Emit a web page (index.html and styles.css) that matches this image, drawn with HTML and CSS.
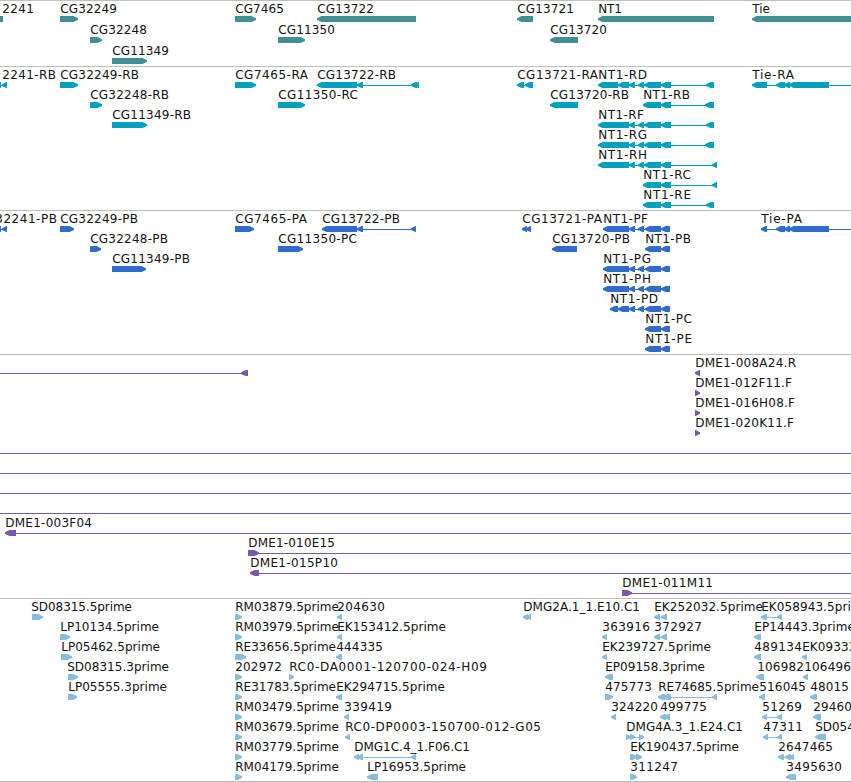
FILE: index.html
```
<!DOCTYPE html>
<html lang="en">
<head>
    <meta charset="UTF-8">
    <meta name="viewport" content="width=device-width, initial-scale=1.0">
    <title>Genome Browser</title>
    <link rel="stylesheet" href="styles.css">
</head>
<body>
    <main class="browser" id="browser"></main>
    <script src="tracks.js"></script>
</body>
</html>
```
FILE: styles.css
```
body {
    margin: 0;
    background: #fff;
    font-family: "DejaVu Sans", sans-serif;
    font-size: 12px;
    color: #000;
}
.browser {
    display: flex;
    flex-direction: column;
    overflow: hidden;
    border-bottom: 1px solid #bebebe;
}
.track {
    box-sizing: border-box;
    border-top: 1px solid #bebebe;
    overflow: hidden;
}
.track svg {
    display: block;
    width: 100%;
    height: 100%;
}
.track text {
    fill: #111;
}
.genes {
    height: 66px;
    color: #408f94;
}
.transcripts {
    height: 144px;
    color: #00a0c0;
}
.proteins {
    height: 144px;
    color: #306ccc;
}
.clones {
    height: 244px;
    color: #7858a8;
}
.ests {
    height: 183px;
    color: #88bcdc;
}
.glyph {
    fill: currentColor;
}
.intron {
    fill: currentColor;
    shape-rendering: crispEdges;
}
```
FILE: tracks.js
```
// feature: [row, strand, label, label start, label end, blocks, line end]
const ntExons = [[629, 635], [638, 644], [644, 661], [661, 671]];
const ntCds = [[603, 629], [629, 635], [638, 644], [645, 661], [661, 670]];
const tieExons = [[776, 785], [784, 790], [789, 829]];

const tracks = [
    { name: 'genes', pitch: 21, features: [
        [0, '-', '2241', 3, 34, [[-8, 3]]],
        [0, '+', 'CG32249', 61, 117, [[60, 78]]],
        [0, '+', 'CG7465', 236, 284, [[235, 256]]],
        [0, '-', 'CG13722', 318, 374, [[317, 416]]],
        [0, '-', 'CG13721', 518, 574, [[517, 533]]],
        [0, '-', 'NT1', 599, 622, [[598, 714]]],
        [0, '-', 'Tie', 753, 770, [[752, 860]]],
        [1, '+', 'CG32248', 91, 147, [[90, 102]]],
        [1, '+', 'CG11350', 279, 335, [[278, 305]]],
        [1, '-', 'CG13720', 551, 607, [[550, 578]]],
        [2, '+', 'CG11349', 113, 169, [[112, 147]]]
    ] },
    { name: 'transcripts', pitch: 20, features: [
        [0, '-', '2241-RB', 3, 56, [[-4, 1], [2, 7]]],
        [0, '+', 'CG32249-RB', 61, 139, [[60, 78]]],
        [0, '+', 'CG7465-RA', 236, 308, [[235, 256]]],
        [0, '-', 'CG13722-RB', 318, 396, [[317, 357], [357, 363], [411, 417], [414, 419]]],
        [0, '-', 'CG13721-RA', 518, 598, [[517, 524], [525, 533]]],
        [0, '-', 'NT1-RD', 599, 647, [[598, 618], [618, 629], ...ntExons, [706, 714]]],
        [0, '-', 'Tie-RA', 753, 794, [[752, 767], ...tieExons], 860],
        [1, '+', 'CG32248-RB', 91, 169, [[90, 102]]],
        [1, '+', 'CG11350-RC', 279, 358, [[278, 305]]],
        [1, '-', 'CG13720-RB', 551, 629, [[550, 578]]],
        [1, '-', 'NT1-RB', 644, 690, [[643, 661], [661, 671], [705, 714]]],
        [2, '+', 'CG11349-RB', 113, 191, [[112, 147]]],
        [2, '-', 'NT1-RF', 599, 644, [[598, 629], ...ntExons, [706, 714]]],
        [3, '-', 'NT1-RG', 599, 647, [[598, 629], ...ntExons, [705, 714]]],
        [4, '-', 'NT1-RH', 599, 647, [[598, 629], ...ntExons, [712, 717]]],
        [5, '-', 'NT1-RC', 644, 691, [[643, 661], [661, 671], [712, 717]]],
        [6, '-', 'NT1-RE', 644, 691, [[643, 661], [661, 671], [706, 714]]]
    ] },
    { name: 'proteins', pitch: 20, features: [
        [0, '-', '32241-PB', -4, 57, [[-4, 1], [2, 7]]],
        [0, '+', 'CG32249-PB', 61, 138, [[60, 74]]],
        [0, '+', 'CG7465-PA', 236, 307, [[235, 254]]],
        [0, '-', 'CG13722-PB', 323, 400, [[322, 357], [357, 363], [411, 416]]],
        [0, '-', 'CG13721-PA', 523, 602, [[522, 527], [526, 531]]],
        [0, '-', 'NT1-PF', 604, 648, ntCds],
        [0, '-', 'Tie-PA', 762, 802, [[761, 767], ...tieExons], 860],
        [1, '+', 'CG32248-PB', 91, 168, [[90, 101]]],
        [1, '+', 'CG11350-PC', 279, 357, [[278, 303]]],
        [1, '-', 'CG13720-PB', 553, 630, [[552, 577]]],
        [1, '-', 'NT1-PB', 646, 691, [[645, 661], [661, 670]]],
        [2, '+', 'CG11349-PB', 113, 190, [[112, 146]]],
        [2, '-', 'NT1-PG', 604, 651, ntCds],
        [3, '-', 'NT1-PH', 604, 651, ntCds],
        [4, '-', 'NT1-PD', 611, 658, [[610, 618], [618, 629], ...ntCds.slice(1)]],
        [5, '-', 'NT1-PC', 646, 692, [[645, 661], [661, 670]]],
        [6, '-', 'NT1-PE', 646, 692, [[645, 661], [661, 670]]]
    ] },
    { name: 'clones', pitch: 20, features: [
        [0, '-', '', 0, 0, [[-9, -4], [241, 248]]],
        [0, '-', 'DME1-008A24.R', 696, 796, [[695, 700]]],
        [1, '+', 'DME1-012F11.F', 696, 792, [[695, 700]]],
        [2, '+', 'DME1-016H08.F', 696, 795, [[695, 700]]],
        [3, '+', 'DME1-020K11.F', 696, 794, [[695, 700]]],
        [4, '-', '', 0, 0, [[-9, -4]], 860],
        [5, '-', '', 0, 0, [[-9, -4]], 860],
        [6, '-', '', 0, 0, [[-9, -4]], 860],
        [7, '-', '', 0, 0, [[-9, -4]], 860],
        [8, '-', 'DME1-003F04', 6, 92, [[5, 16]], 860],
        [9, '+', 'DME1-010E15', 249, 335, [[248, 259]], 860],
        [10, '-', 'DME1-015P10', 251, 338, [[250, 259]], 860],
        [11, '+', 'DME1-011M11', 623, 713, [[622, 632]], 860]
    ] },
    { name: 'ests', pitch: 20, features: [
        [0, '+', 'SD08315.5prime', 32, 132, [[32, 43]]],
        [0, '+', 'RM03879.5prime', 236, 339, [[235, 242]]],
        [0, '-', '204630', 338, 385, [[337, 342]]],
        [0, '-', 'DMG2A.1_1.E10.C1', 524, 640, [[523, 528], [526, 531]]],
        [0, '-', 'EK252032.5prime', 655, 763, [[654, 660], [661, 667]]],
        [0, '-', 'EK058943.5prime', 762, 870, [[761, 767], [777, 782]]],
        [1, '+', 'LP10134.5prime', 61, 159, [[60, 70]]],
        [1, '+', 'RM03979.5prime', 236, 339, [[235, 242]]],
        [1, '-', 'EK153412.5prime', 338, 446, [[337, 342]]],
        [1, '-', '363916', 603, 650, [[602, 607]]],
        [1, '-', '372927', 655, 702, [[654, 660], [661, 667]]],
        [1, '-', 'EP14443.3prime', 755, 855, [[754, 761]]],
        [2, '+', 'LP05462.5prime', 62, 160, [[61, 72]]],
        [2, '+', 'RE33656.5prime', 236, 336, [[235, 246]]],
        [2, '-', '444335', 337, 383, [[336, 342]]],
        [2, '-', 'EK239727.5prime', 603, 711, [[602, 607]]],
        [2, '-', '489134', 755, 802, [[754, 761]]],
        [2, '-', 'EK093331.5prime', 803, 911, [[802, 807]]],
        [3, '+', 'SD08315.3prime', 68, 169, [[68, 78]]],
        [3, '+', '202972', 236, 282, [[235, 242]]],
        [3, '+', 'RC0-DA0001-120700-024-H09', 290, 487, [[289, 294]]],
        [3, '-', 'EP09158.3prime', 606, 705, [[605, 613]]],
        [3, '-', '106982', 758, 804, [[756, 764]]],
        [3, '-', '106496', 805, 851, [[803, 808]]],
        [4, '+', 'LP05555.3prime', 69, 167, [[68, 77]]],
        [4, '+', 'RE31783.5prime', 236, 336, [[235, 242]]],
        [4, '-', 'EK294715.5prime', 337, 445, [[336, 342]]],
        [4, '+', '475773', 606, 652, [[605, 613]]],
        [4, '-', 'RE74685.5prime', 659, 759, [[658, 665], [663, 671], [712, 717]]],
        [4, '-', '516045', 760, 806, [[759, 765]]],
        [4, '-', '48015', 811, 849, [[810, 817]]],
        [5, '+', 'RM03479.5prime', 236, 339, [[235, 242]]],
        [5, '-', '339419', 345, 392, [[344, 349]]],
        [5, '-', '324220', 612, 658, [[611, 616]]],
        [5, '-', '499775', 661, 707, [[660, 666], [664, 670]]],
        [5, '-', '51269', 763, 802, [[762, 767], [777, 782]]],
        [5, '-', '29460', 814, 852, [[813, 821]]],
        [6, '+', 'RM03679.5prime', 236, 339, [[235, 242]]],
        [6, '-', 'RC0-DP0003-150700-012-G05', 346, 541, [[345, 350]]],
        [6, '+', 'DMG4A.3_1.E24.C1', 627, 743, [[626, 631], [630, 635], [639, 644]]],
        [6, '-', '47311', 764, 803, [[763, 768], [777, 782]]],
        [6, '-', 'SD05432.5prime', 816, 916, [[815, 826]]],
        [7, '+', 'RM03779.5prime', 236, 339, [[235, 242]]],
        [7, '-', 'DMG1C.4_1.F06.C1', 355, 470, [[354, 359], [357, 363], [411, 416]]],
        [7, '+', 'EK190437.5prime', 631, 739, [[630, 637], [636, 642]]],
        [7, '-', '2647465', 779, 833, [[778, 784], [785, 791], [789, 794]]],
        [8, '+', 'RM04179.5prime', 236, 339, [[235, 242]]],
        [8, '-', 'LP16953.5prime', 368, 466, [[367, 378]]],
        [8, '+', '311247', 631, 678, [[630, 637]]],
        [8, '-', '3495630', 787, 842, [[786, 796]]]
    ] }
];

function svgNode(tag, attrs, parent) {
    const node = document.createElementNS('http://www.w3.org/2000/svg', tag);
    for (const key in attrs) {
        node.setAttribute(key, attrs[key]);
    }
    parent.appendChild(node);
    return node;
}

// block with a blunt point at the end the strand runs to
function arrow(x1, x2, y, strand) {
    const tip = strand === '-' ? x1 : x2;
    const tail = strand === '-' ? x2 : x1;
    const neck = strand === '-' ? x1 + 4.5 : x2 - 4.5;
    return `${tip},${y + 2.2} ${neck},${y} ${tail},${y} ${tail},${y + 6} ${neck},${y + 6} ${tip},${y + 4}`;
}

const browser = document.getElementById('browser');

tracks.forEach(track => {
    const section = document.createElement('section');
    section.className = 'track ' + track.name;
    browser.appendChild(section);
    const svg = svgNode('svg', {}, section);

    track.features.forEach(([row, strand, label, start, end, blocks, lineEnd]) => {
        const top = row * track.pitch;
        const from = blocks[0][0] + 3;
        const to = lineEnd || blocks[blocks.length - 1][1] - 2;

        if (lineEnd || blocks.length > 1) {
            svgNode('rect', { class: 'intron', x: from, y: top + 18, width: to - from, height: 1 }, svg);
        }
        blocks.forEach(([x1, x2]) => {
            svgNode('polygon', { class: 'glyph', points: arrow(x1, x2, top + 15, strand) }, svg);
        });
        if (label) {
            const text = svgNode('text', { x: start - 0.8, y: top + 12, textLength: end - start + 0.8 }, svg);
            text.textContent = label;
        }
    });
});
```
